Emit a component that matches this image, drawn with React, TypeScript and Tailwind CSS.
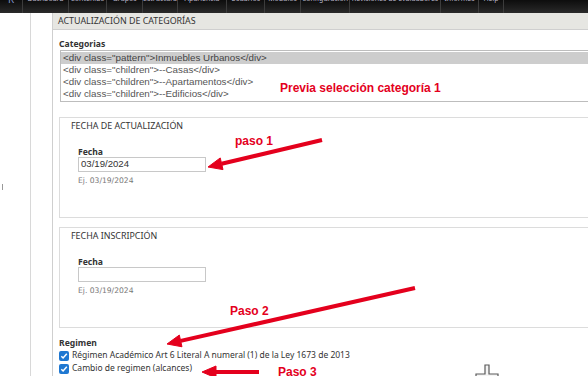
import React from "react";

const navItems = [
  { label: "Dashboard", w: "w-[46px]" },
  { label: "Contenido", w: "w-[38px]" },
  { label: "Grupos", w: "w-[36px]" },
  { label: "Estructura", w: "w-[35px]" },
  { label: "Apariencia", w: "w-[49px]" },
  { label: "Usuarios", w: "w-[38px]" },
  { label: "Módulos", w: "w-[36px]" },
  { label: "Configuración", w: "w-[49px]" },
  { label: "Revisiones de evaluadores", w: "w-[91px]" },
  { label: "Informes", w: "w-[38px]" },
  { label: "Help", w: "w-[25px]" },
];

const options = [
  '<div class="pattern">Inmuebles Urbanos</div>',
  '<div class="children">--Casas</div>',
  '<div class="children">--Apartamentos</div>',
  '<div class="children">--Edificios</div>',
];

type ArrowProps = { x1: number; y1: number; x2: number; y2: number };

// red annotation arrow, head at (x2, y2)
const Arrow = ({ x1, y1, x2, y2 }: ArrowProps) => {
  const dx = x2 - x1;
  const dy = y2 - y1;
  const len = Math.hypot(dx, dy);
  const ux = dx / len;
  const uy = dy / len;
  const bx = x2 - 14 * ux;
  const by = y2 - 14 * uy;
  const nx = -uy;
  const ny = ux;
  const pts = `${x2},${y2} ${bx + 6 * nx},${by + 6 * ny} ${bx - 6 * nx},${by - 6 * ny}`;
  return (
    <g fill="#e4001d" stroke="#e4001d">
      <line x1={x1} y1={y1} x2={bx} y2={by} strokeWidth={4} />
      <polygon points={pts} strokeWidth={1} strokeLinejoin="round" />
    </g>
  );
};

const Check = () => (
  <span className="flex h-[10px] w-[10px] shrink-0 items-center justify-center rounded-[2px] bg-[#1f78d1]">
    <svg width="8" height="8" viewBox="0 0 8 8">
      <path d="M1.3 4.2 3.1 6 6.8 1.8" fill="none" stroke="#fff" strokeWidth="1.5" />
    </svg>
  </span>
);

const DateFieldset = ({ title, value }: { title: string; value: string }) => (
  <div className="flex h-[101px] w-[560px] flex-col border border-[#dcdcdc] pl-[11px] pt-[3px]">
    <div className="text-[8.9px] leading-[10px] text-[#333]">{title}</div>
    <div className="ml-[7px] mt-[15px] text-[8.6px] font-bold leading-[12px] text-[#333]">Fecha</div>
    <div className="ml-[7px] mt-[-1px] flex h-[15px] w-[128px] items-center border border-[#c8c8c8] pl-[2px] font-['Liberation_Sans',Arial,sans-serif] text-[9.6px] text-[#333]">
      {value}
    </div>
    <div className="ml-[7px] mt-[4px] font-['DejaVu_Sans',sans-serif] text-[7.6px] leading-[10px] text-[#777]">
      Ej. 03/19/2024
    </div>
  </div>
);

export default function App() {
  return (
    <div className="relative h-[376px] w-[588px] overflow-hidden bg-white font-['Noto_Sans',sans-serif]">
      <nav className="flex h-[13px] items-start overflow-hidden bg-linear-to-b from-[#0d0d0d] to-[#2a2a2a]">
        <div className="flex h-full w-[23px] justify-center border-r border-[#3c3c3c]">
          <span className="-mt-[6px] text-[10px] leading-[10px] text-[#7f93c9]">R</span>
        </div>
        {navItems.map((it) => (
          <div
            key={it.label}
            className={`flex h-full justify-center whitespace-nowrap border-r border-[#3c3c3c] ${it.w}`}
          >
            <span className="-mt-[5px] text-[7px] leading-[8px] text-[#b9b6c9]">{it.label}</span>
          </div>
        ))}
      </nav>

      <div className="flex h-[363px]">
        <aside className="flex w-[31px] shrink-0 flex-col border-r border-[#d8d8d8]">
          <div className="ml-[2px] mt-[171px] h-[6px] w-[1px] bg-[#999]" />
        </aside>

        <section className="ml-[21px] w-[580px] shrink-0 border-l border-[#cfcfcf]">
          <div className="flex h-[17px] items-center border-b border-[#cfcfcf] bg-[#e6e6e2] pl-[5px] text-[8.9px] text-[#333]">
            ACTUALIZACIÓN DE CATEGORÍAS
          </div>

          <div className="pl-[6px]">
            <div className="mt-[8px] text-[8.6px] font-bold leading-[12px] text-[#333]">Categorias</div>
            <div className="ml-[1px] w-[560px] border border-[#bdbdbd] py-[1px] font-['Liberation_Sans',Arial,sans-serif] text-[9.8px] leading-[12px] text-[#555]">
              {options.map((o, i) => (
                <div key={o} className={`pl-[2px] ${i === 0 ? "bg-[#cdcdcd] text-[#444]" : ""}`}>
                  {o}
                </div>
              ))}
            </div>

            <div className="mt-[15px]">
              <DateFieldset title="FECHA DE ACTUALIZACIÓN" value="03/19/2024" />
            </div>
            <div className="mt-[9px]">
              <DateFieldset title="FECHA INSCRIPCIÓN" value="" />
            </div>

            <div className="mt-[9px] text-[8.6px] font-bold leading-[12px] text-[#333]">Regimen</div>
            <div className="flex h-[13px] items-center gap-[3px] text-[8.5px] text-[#333]">
              <Check />
              <span>Régimen Académico Art 6 Literal A numeral (1) de la Ley 1673 de 2013</span>
            </div>
            <div className="flex h-[13px] items-center gap-[3px] text-[8.5px] text-[#333]">
              <Check />
              <span>Cambio de regimen (alcances)</span>
            </div>
          </div>
        </section>
      </div>

      {/* annotation overlay */}
      <span className="absolute left-[280px] top-[81px] font-['Liberation_Sans',Arial,sans-serif] text-[12px] font-bold leading-[14px] text-[#e4001d]">
        Previa selección categoría 1
      </span>
      <span className="absolute left-[235px] top-[134px] font-['Liberation_Sans',Arial,sans-serif] text-[12px] font-bold leading-[14px] text-[#e4001d]">
        paso 1
      </span>
      <span className="absolute left-[230px] top-[304px] font-['Liberation_Sans',Arial,sans-serif] text-[12px] font-bold leading-[14px] text-[#e4001d]">
        Paso 2
      </span>
      <span className="absolute left-[278px] top-[365px] font-['Liberation_Sans',Arial,sans-serif] text-[12px] font-bold leading-[14px] text-[#e4001d]">
        Paso 3
      </span>
      <svg className="pointer-events-none absolute left-0 top-0" width="588" height="376">
        <Arrow x1={322} y1={140} x2={208} y2={167} />
        <Arrow x1={415} y1={288} x2={167} y2={344} />
        <Arrow x1={259} y1={372} x2={202} y2={372} />
        <path
          d="M485 365h4v9h9v4h-9v9h-4v-9h-9v-4h9z"
          fill="#f4f4f4"
          stroke="#5a5a5a"
          strokeWidth="1.2"
        />
      </svg>
    </div>
  );
}
